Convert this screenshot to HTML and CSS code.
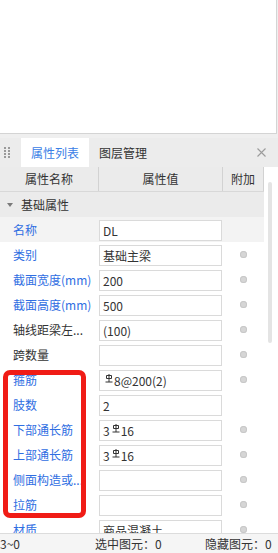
FILE: index.html
```html
<!DOCTYPE html>
<html lang="zh-CN">

<head>
    <meta charset="UTF-8" />
    <meta name="viewport" content="width=device-width, initial-scale=1.0" />
    <title>属性列表</title>

    <link rel="stylesheet" href="styles.css">
</head>

<body>
    <!-- AREA DE DESENHO -->
    <div class="canvas"></div>

    <div class="panel">
        <!-- ABAS -->
        <div class="tabbar">
            <span class="grip">
                <svg width="6" height="11" viewBox="0 0 6 11">
                    <g fill="#9a9a9a">
                        <rect x="0" y="0" width="2" height="2" /><rect x="4" y="0" width="2" height="2" />
                        <rect x="0" y="3" width="2" height="2" /><rect x="4" y="3" width="2" height="2" />
                        <rect x="0" y="6" width="2" height="2" /><rect x="4" y="6" width="2" height="2" />
                        <rect x="0" y="9" width="2" height="2" /><rect x="4" y="9" width="2" height="2" />
                    </g>
                </svg>
            </span>
            <span class="tab active">属性列表</span>
            <span class="tab">图层管理</span>
            <span class="close">
                <svg width="9" height="9" viewBox="0 0 9 9">
                    <path d="M0.5 0.5l8 8M8.5 0.5l-8 8" stroke="#9c9c9c" stroke-width="1.1" fill="none" />
                </svg>
            </span>
        </div>

        <!-- TABELA -->
        <div class="grid">
            <div class="table">
                <div class="row head">
                    <div class="c1">属性名称</div>
                    <div class="c2">属性值</div>
                    <div class="c3">附加</div>
                </div>

                <div class="row group">
                    <span class="caret"></span>基础属性
                </div>

                <div class="row prop selected">
                    <div class="c1">名称</div>
                    <div class="c2"><div class="val">DL</div></div>
                    <div class="c3"></div>
                </div>
                <div class="row prop">
                    <div class="c1">类别</div>
                    <div class="c2"><div class="val">基础主梁</div></div>
                    <div class="c3"><span class="dot"></span></div>
                </div>
                <div class="row prop">
                    <div class="c1">截面宽度(mm)</div>
                    <div class="c2"><div class="val">200</div></div>
                    <div class="c3"><span class="dot"></span></div>
                </div>
                <div class="row prop">
                    <div class="c1">截面高度(mm)</div>
                    <div class="c2"><div class="val">500</div></div>
                    <div class="c3"><span class="dot"></span></div>
                </div>
                <div class="row prop">
                    <div class="c1 plain">轴线距梁左...</div>
                    <div class="c2"><div class="val">(100)</div></div>
                    <div class="c3"><span class="dot"></span></div>
                </div>
                <div class="row prop">
                    <div class="c1 plain">跨数量</div>
                    <div class="c2"><div class="val"></div></div>
                    <div class="c3"><span class="dot"></span></div>
                </div>
                <div class="row prop">
                    <div class="c1">箍筋</div>
                    <div class="c2"><div class="val"><svg class="rebar" width="8" height="9" viewBox="0 0 8 9"><path d="M1.5 1.5h5v3h-5zM4 0v8M0.5 8h7" stroke="#333" stroke-width="1" fill="none" /></svg>8@200(2)</div></div>
                    <div class="c3"><span class="dot"></span></div>
                </div>
                <div class="row prop">
                    <div class="c1">肢数</div>
                    <div class="c2"><div class="val">2</div></div>
                    <div class="c3"></div>
                </div>
                <div class="row prop">
                    <div class="c1">下部通长筋</div>
                    <div class="c2"><div class="val">3<svg class="rebar" width="8" height="9" viewBox="0 0 8 9"><path d="M1.5 1.5h5v3h-5zM4 0v8M0.5 8h7" stroke="#333" stroke-width="1" fill="none" /></svg>16</div></div>
                    <div class="c3"><span class="dot"></span></div>
                </div>
                <div class="row prop">
                    <div class="c1">上部通长筋</div>
                    <div class="c2"><div class="val">3<svg class="rebar" width="8" height="9" viewBox="0 0 8 9"><path d="M1.5 1.5h5v3h-5zM4 0v8M0.5 8h7" stroke="#333" stroke-width="1" fill="none" /></svg>16</div></div>
                    <div class="c3"><span class="dot"></span></div>
                </div>
                <div class="row prop">
                    <div class="c1">侧面构造或...</div>
                    <div class="c2"><div class="val"></div></div>
                    <div class="c3"><span class="dot"></span></div>
                </div>
                <div class="row prop">
                    <div class="c1">拉筋</div>
                    <div class="c2"><div class="val"></div></div>
                    <div class="c3"><span class="dot"></span></div>
                </div>
                <div class="row prop">
                    <div class="c1">材质</div>
                    <div class="c2"><div class="val">商品混凝土</div></div>
                    <div class="c3"><span class="dot"></span></div>
                </div>
            </div>

            <!-- BARRA DE ROLAGEM -->
            <div class="scroll">
                <div class="thumb"></div>
            </div>
        </div>

        <!-- STATUS -->
        <div class="status">
            <span class="s1">3~0</span>
            <span class="s2">选中图元：0</span>
            <span>隐藏图元：0</span>
        </div>
    </div>

    <!-- MARCACAO VERMELHA -->
    <div class="mark"></div>
</body>

</html>
```

FILE: styles.css
```css
body {
    margin: 0;
    width: 278px;
    height: 553px;
    overflow: hidden;
    position: relative;
    background: #efefef;
    font-family: "Microsoft YaHei", "Noto Sans CJK SC", sans-serif;
    font-size: 12px;
    color: #333;
}

.canvas {
    width: 276px;
    height: 133px;
    background: #fff;
    border-right: 1px solid #d4d4d4;
    border-bottom: 1px solid #d4d4d4;
}

.panel {
    margin-top: 4px;
}

.tabbar {
    height: 29px;
    display: flex;
    align-items: stretch;
    background: #ececec;
}

.grip {
    width: 21px;
    display: flex;
    align-items: center;
    padding-left: 4px;
    box-sizing: border-box;
}

.tab {
    padding: 0 10px;
    line-height: 29px;
}

.tab.active {
    background: #fff;
    color: #3a80e6;
}

.close {
    margin-left: auto;
    margin-right: 12px;
    display: flex;
    align-items: center;
}

.grid {
    display: flex;
    height: 366px;
    overflow: hidden;
}

.table {
    width: 264px;
}

.scroll {
    width: 14px;
    background: #fff;
}

.thumb {
    margin: 15px 0 0 4px;
    width: 4px;
    height: 161px;
    background: #e4e4e4;
    border-radius: 2px;
}

.row {
    display: flex;
    height: 25px;
    line-height: 25px;
    background: #fff;
}

.row .c1 {
    width: 99px;
    box-sizing: border-box;
    white-space: nowrap;
    overflow: hidden;
}

.row .c2 {
    width: 124px;
}

.row .c3 {
    width: 41px;
    display: flex;
    align-items: center;
    justify-content: center;
}

.head {
    background: #ebebeb;
    border-bottom: 1px solid #d8d8d8;
    box-sizing: border-box;
    line-height: 24px;
}

.head .c1,
.head .c2,
.head .c3 {
    text-align: center;
    border-right: 1px solid #d2d2d2;
    box-sizing: border-box;
}

.group {
    background: #ebebeb;
    align-items: center;
}

.caret {
    margin: 0 8px 0 7px;
    border-left: 3px solid transparent;
    border-right: 3px solid transparent;
    border-top: 4px solid #7a7a7a;
}

.prop .c1 {
    padding-left: 13px;
    color: #2f6ee2;
}

.prop .c1.plain {
    color: #333;
}

.prop.selected {
    background: #f3f3f3;
}

.val {
    margin-top: 3px;
    width: 123px;
    height: 21px;
    line-height: 20px;
    border: 1px solid #dadada;
    background: #fff;
    box-sizing: border-box;
    padding-left: 3px;
    white-space: nowrap;
    overflow: hidden;
}

.rebar {
    vertical-align: 3px;
    margin: 0 1px 0 2px;
}

.dot {
    width: 7px;
    height: 7px;
    border-radius: 50%;
    background: #d6d6d6;
    box-shadow: inset 0 0 0 1px #c8c8c8;
}

.status {
    height: 20px;
    line-height: 19px;
    background: #f5f5f5;
    border-top: 1px solid #dcdcdc;
    box-sizing: border-box;
    display: flex;
    white-space: nowrap;
}

.s1 {
    width: 95px;
}

.s2 {
    width: 110px;
}

.mark {
    position: absolute;
    left: 3px;
    top: 370px;
    width: 83px;
    height: 148px;
    border: 5px solid #f01c16;
    border-radius: 7px;
    box-sizing: border-box;
}
```
